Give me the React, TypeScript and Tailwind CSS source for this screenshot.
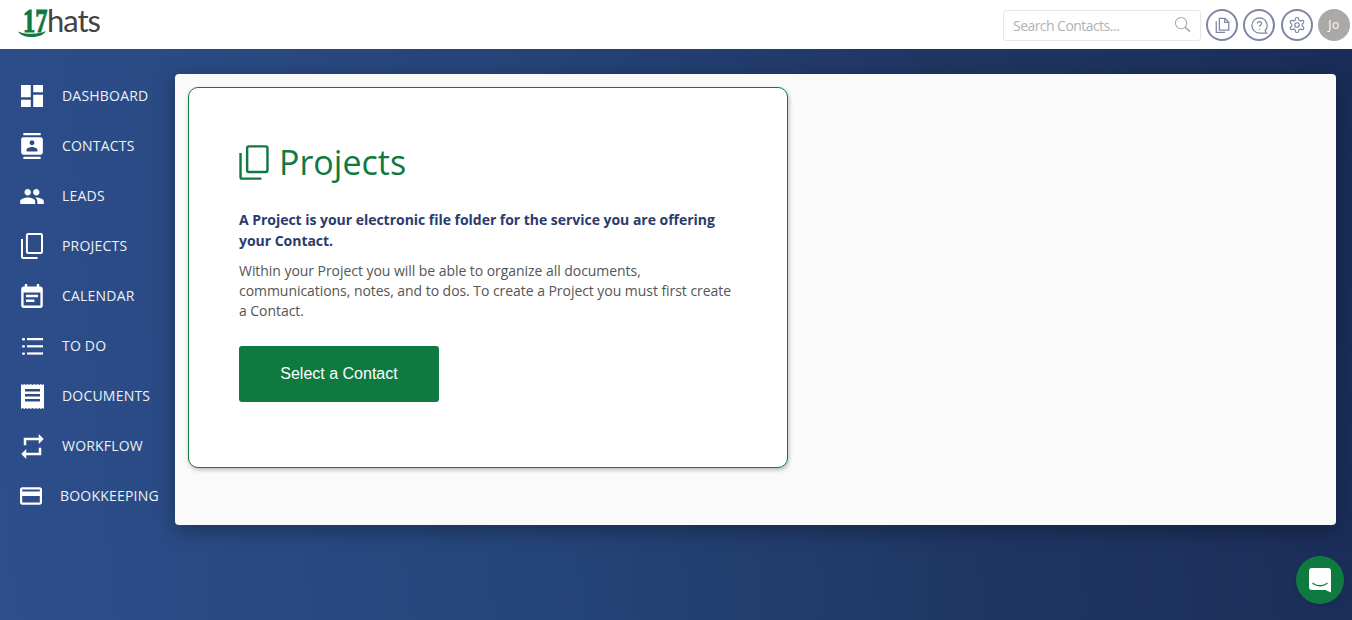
import React from 'react'

const open = "font-['Open_Sans',sans-serif]"

function Dashboard() {
  return (
    <svg viewBox="3 3 18 18" className="h-[22px] w-[22px]" fill="currentColor">
      <path d="M3 13h8V3H3v10zm0 8h8v-6H3v6zm10 0h8V11h-8v10zm0-18v6h8V3h-8z" />
    </svg>
  )
}

function Contacts() {
  return (
    <svg viewBox="2 0 20 24" className="h-[26px] w-[22px]" fill="currentColor">
      <path d="M20 0H4v2h16V0zM4 24h16v-2H4v2zM20 4H4c-1.100 0-2 .9-2 2v12c0 1.100.9 2 2 2h16c1.100 0 2-.9 2-2V6c0-1.100-.9-2-2-2zm-8 2.750c1.240 0 2.250 1.010 2.250 2.250s-1.010 2.250-2.250 2.250S9.750 10.240 9.750 9 10.760 6.750 12 6.750zM17 17H7v-1.500c0-1.670 3.330-2.500 5-2.500s5 .83 5 2.500V17z" />
    </svg>
  )
}

function Leads() {
  return (
    <svg viewBox="1 5 22 14" className="h-[15px] w-[24px] -ml-[1px]" fill="currentColor">
      <path d="M16 11c1.660 0 2.990-1.340 2.990-3S17.660 5 16 5c-1.660 0-3 1.340-3 3s1.340 3 3 3zm-8 0c1.660 0 2.990-1.340 2.990-3S9.660 5 8 5C6.340 5 5 6.340 5 8s1.340 3 3 3zm0 2c-2.330 0-7 1.170-7 3.500V19h14v-2.500c0-2.330-4.670-3.500-7-3.500zm8 0c-.29 0-.62.02-.97.05 1.160.84 1.970 1.970 1.970 3.450V19h6v-2.500c0-2.330-4.670-3.500-7-3.500z" />
    </svg>
  )
}

function Pages({ className, stroke = 2 }: { className?: string; stroke?: number }) {
  return (
    <svg viewBox="0 0 22 26" className={className} fill="none" stroke="currentColor" strokeWidth={stroke}>
      <rect x="5.900" y="1" width="15.100" height="19" rx="1.300" />
      <path d="M1 6v18c0 .6.4 1 1 1h14.500" />
    </svg>
  )
}

function Calendar() {
  return (
    <svg viewBox="3 1 18 20" className="h-[24px] w-[22px]" fill="currentColor">
      <path d="M17 10H7v2h10v-2zm2-7h-1V1h-2v2H8V1H6v2H5c-1.110 0-1.990.9-1.990 2L3 19c0 1.100.89 2 2 2h14c1.100 0 2-.9 2-2V5c0-1.100-.9-2-2-2zm0 16H5V8h14v11zm-5-5H7v2h7v-2z" />
    </svg>
  )
}

function TodoList() {
  return (
    <svg viewBox="0 0 21 17" className="ml-[1px] h-[17px] w-[21px]" fill="currentColor">
      <rect x="0" y="0" width="3" height="2.400" rx="1" />
      <rect x="0" y="7.200" width="3" height="2.400" rx="1" />
      <rect x="0" y="14.400" width="3" height="2.400" rx="1" />
      <rect x="5" y="0" width="16" height="2.200" />
      <rect x="5" y="7.200" width="16" height="2.200" />
      <rect x="5" y="14.400" width="16" height="2.200" />
    </svg>
  )
}

function Documents() {
  return (
    <svg viewBox="0 0 23 25" className="h-[25px] w-[23px]" fill="currentColor">
      <path
        fillRule="evenodd"
        d="M0 0l1.600 1L3.200 0l1.600 1 1.600-1 1.600 1L9.600 0l1.900 1 1.900-1 1.600 1 1.600-1 1.600 1 1.600-1 1.600 1L23 0v25l-1.500-1-1.600 1-1.600-1-1.600 1-1.600-1-1.600 1-1.900-1-1.900 1-1.600-1-1.600 1-1.600-1-1.600 1-1.600-1L0 25V0zm4 5v2.400h15V5H4zm0 5v2.400h15V10H4zm0 5v2.400h15V15H4z"
      />
    </svg>
  )
}

function Workflow() {
  return (
    <svg viewBox="3 2 18 20" className="h-[25px] w-[23px]" fill="currentColor">
      <path d="M7 7h10v3l4-4-4-4v3H5v6h2V7zm10 10H7v-3l-4 4 4 4v-3h12v-6h-2v4z" />
    </svg>
  )
}

function CreditCard() {
  return (
    <svg viewBox="2 4 20 16" className="h-[18px] w-[22px] -ml-[1px]" fill="currentColor">
      <path d="M20 4H4c-1.110 0-1.990.89-1.990 2L2 18c0 1.110.89 2 2 2h16c1.110 0 2-.89 2-2V6c0-1.110-.89-2-2-2zm0 14H4v-6h16v6zm0-10H4V6h16v2z" />
    </svg>
  )
}

const navItems = [
  { label: 'DASHBOARD', icon: <Dashboard /> },
  { label: 'CONTACTS', icon: <Contacts /> },
  { label: 'LEADS', icon: <Leads /> },
  { label: 'PROJECTS', icon: <Pages className="h-[26px] w-[22px]" /> },
  { label: 'CALENDAR', icon: <Calendar /> },
  { label: 'TO DO', icon: <TodoList /> },
  { label: 'DOCUMENTS', icon: <Documents /> },
  { label: 'WORKFLOW', icon: <Workflow /> },
  { label: 'BOOKKEEPING', icon: <CreditCard />, shift: true },
]

function Logo() {
  return (
    <div className="relative ml-[18px] h-[49px] w-[110px] select-none">
      <span className="absolute left-[5px] top-0 origin-left scale-x-[0.72] font-['Liberation_Serif',serif] text-[34px] font-bold leading-[42px] text-[#0d7a3e] [-webkit-text-stroke:1px_#0d7a3e]">
        17
      </span>
      <span className="absolute left-[29px] top-0 font-['Lato',sans-serif] text-[31px] leading-[40px] tracking-[-1px] text-[#444444]">
        hats
      </span>
      <svg viewBox="0 0 28 7" className="absolute left-0 top-[31px] h-[7px] w-[28px] text-[#0d7a3e]" fill="currentColor">
        <path d="M0 .5c4 1.800 9 2.500 14 2.300 5 0 10-1 14-2.800-2 3.700-7 6-14 6C7 6 2 4 0 .5z" />
      </svg>
    </div>
  )
}

function RoundButton({ children, className = '' }: { children: React.ReactNode; className?: string }) {
  return (
    <div className={`flex h-[32px] w-[32px] items-center justify-center rounded-full border-2 border-[#7f86a3] text-[#7f86a3] ${className}`}>
      {children}
    </div>
  )
}

export default function App() {
  return (
    <div className={`relative flex h-[620px] w-[1352px] flex-col overflow-hidden ${open}`}>
      <header className="flex h-[49px] shrink-0 items-start justify-between bg-white">
        <Logo />
        <div className="mr-[2px] mt-[9px] flex items-center">
          <div className="mr-[5px] flex h-[31px] w-[198px] items-center justify-between rounded-[3px] border border-[#e6e6e6] pl-[9px] pr-[9px]">
            <span className="pt-[2px] text-sm tracking-[-0.55px] text-[#b3b3b3]">Search Contacts...</span>
            <svg viewBox="0 0 18 18" className="mb-[1px] h-[17px] w-[17px] text-[#a9a9a9]" fill="none" stroke="currentColor" strokeWidth="1.100">
              <circle cx="7.500" cy="7.500" r="6" />
              <path d="M12 12l5 4.500" strokeWidth="1.600" />
            </svg>
          </div>
          <div className="flex items-center gap-[5px]">
            <RoundButton>
              <svg viewBox="0 0 24 26" className="h-[17px] w-[15px]" fill="none" stroke="currentColor" strokeWidth="2">
                <path d="M7 1.500h9l6 6v13H7z" />
                <path d="M15.500 1.500v6.500H22" />
                <path d="M2 6v18h14" />
              </svg>
            </RoundButton>
            <RoundButton className="mr-px">
              <svg viewBox="0 0 20 20" className="h-[19px] w-[19px]" fill="none" stroke="currentColor" strokeWidth="1.300">
                <path d="M10 2a8 8 0 1 0 0 16h7.500l-1.600-2.600A8 8 0 0 0 10 2z" />
                <path d="M7.800 8c0-1.300 1-2.200 2.200-2.200s2.200.9 2.200 2c0 1.700-2.200 1.800-2.200 3.600" />
                <circle cx="10" cy="14" r=".7" fill="currentColor" stroke="none" />
              </svg>
            </RoundButton>
            <RoundButton>
              <svg viewBox="0 0 24 24" className="h-[18px] w-[18px]" fill="none" stroke="currentColor" strokeWidth="1.600">
                <path d="M12.220 2h-.44a2 2 0 0 0-2 2v.18a2 2 0 0 1-1 1.730l-.43.250a2 2 0 0 1-2 0l-.15-.080a2 2 0 0 0-2.730.730l-.22.380a2 2 0 0 0 .730 2.730l.15.100a2 2 0 0 1 1 1.720v.510a2 2 0 0 1-1 1.740l-.15.090a2 2 0 0 0-.730 2.730l.22.380a2 2 0 0 0 2.730.730l.15-.080a2 2 0 0 1 2 0l.43.250a2 2 0 0 1 1 1.730V20a2 2 0 0 0 2 2h.44a2 2 0 0 0 2-2v-.18a2 2 0 0 1 1-1.730l.43-.250a2 2 0 0 1 2 0l.15.080a2 2 0 0 0 2.730-.730l.22-.390a2 2 0 0 0-.730-2.730l-.15-.080a2 2 0 0 1-1-1.740v-.500a2 2 0 0 1 1-1.740l.15-.090a2 2 0 0 0 .730-2.730l-.22-.380a2 2 0 0 0-2.730-.730l-.15.080a2 2 0 0 1-2 0l-.43-.250a2 2 0 0 1-1-1.730V4a2 2 0 0 0-2-2z" />
                <circle cx="12" cy="12" r="3" />
              </svg>
            </RoundButton>
            <div className="flex h-[32px] w-[32px] items-center justify-center rounded-full bg-[#a9a9a9] text-xs tracking-[0.5px] text-white">
              Jo
            </div>
          </div>
        </div>
      </header>

      <div className="flex flex-1 bg-[linear-gradient(85deg,#2d4e8b_0%,#254478_40%,#1f3663_70%,#1a2d58_100%)]">
        <nav className="w-[175px] shrink-0 pt-[22px] text-white">
          {navItems.map((item) => (
            <div key={item.label} className="flex h-[50px] items-center pl-[21px]">
              <div className="flex w-[41px] shrink-0 items-center">{item.icon}</div>
              <span className={`text-sm tracking-[0.2px] text-[#eef1f7] ${item.shift ? '-ml-[2px]' : ''}`}>{item.label}</span>
            </div>
          ))}
        </nav>

        <main className="pt-[25px]">
          <div className="h-[451px] w-[1161px] rounded-[4px] bg-[#fafafa] p-[13px] shadow-[0_6px_20px_rgba(0,0,0,0.3)]">
            <div className="h-[381px] w-[600px] rounded-[10px] border border-[#0f7a42] bg-white px-[50px] pt-[49px] shadow-[1px_2px_4px_rgba(0,0,0,0.25)]">
              <div className="flex h-[50px] items-center text-[#0e7a42]">
                <Pages className="h-[35px] w-[30px]" stroke={1.800} />
                <h1 className="ml-[10px] text-[34px] leading-[50px]">Projects</h1>
              </div>
              <p className="mt-[22px] text-sm font-bold leading-[21px] tracking-[-0.03px] text-[#2a3b6e]">
                A Project is your electronic file folder for the service you are offering your Contact.
              </p>
              <p className="mt-[10px] text-sm leading-[20px] tracking-[-0.05px] text-[#555555]">
                Within your Project you will be able to organize all documents, communications, notes, and to dos. To create a Project you must first create a Contact.
              </p>
              <button className="mt-[25px] flex h-[56px] w-[200px] items-center justify-center rounded-[3px] bg-[#0e7a40] font-['Liberation_Sans',sans-serif] text-base text-white">
                Select a Contact
              </button>
            </div>
          </div>
        </main>
      </div>

      <div className="absolute left-[1296px] top-[556px] flex h-[48px] w-[48px] items-center justify-center rounded-full bg-[#0e7a40] shadow-[0_1px_6px_rgba(0,0,0,0.1)]">
        <svg viewBox="0 0 22 25" className="h-[25px] w-[22px]">
          <path fill="#ffffff" d="M3 0h16a3 3 0 0 1 3 3v21.500L16.500 22H3a3 3 0 0 1-3-3V3a3 3 0 0 1 3-3z" />
          <path fill="none" stroke="#0e7a40" strokeWidth="1.400" strokeLinecap="round" d="M4 15.500c4.500 3 9.500 3 14 0" />
        </svg>
      </div>
    </div>
  )
}
